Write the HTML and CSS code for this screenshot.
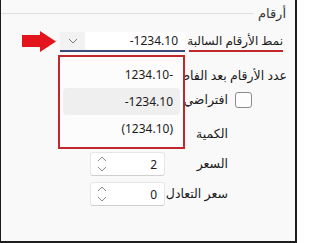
FILE: index.html
```html
<!DOCTYPE html>
<html lang="ar">
<head>
<meta charset="utf-8">
<link rel="stylesheet" href="styles.css">
</head>
<body>
<div class="window" dir="rtl">
  <div class="group">
    <div class="group-head">
      <span class="group-title">أرقام</span>
      <span class="group-line"></span>
    </div>
    <div class="form">
      <div class="row row-neg">
        <span class="lbl lbl-marked">نمط الأرقام السالبة</span>
        <div class="combo">
          <span class="combo-text num">-1234.10</span>
          <span class="combo-btn">
            <svg width="10" height="6" viewBox="0 0 10 6"><path d="M1 1 L5 5 L9 1" fill="none" stroke="#7a7a7a" stroke-width="1"/></svg>
          </span>
        </div>
      </div>
      <div class="row row-dec">
        <span class="lbl lbl-wide">عدد الأرقام بعد الفاصلة العشرية</span>
      </div>
      <div class="sub">
        <div class="check-row">
          <span class="check"></span>
          <span class="lbl">افتراضي (2)</span>
        </div>
        <div class="grid">
          <span class="lbl">الكمية</span>
          <div class="spin"><span class="spin-val num">0</span><span class="spin-btns"><svg width="10" height="18" viewBox="0 0 10 18"><path d="M1 6 L5 2 L9 6 M1 12 L5 16 L9 12" fill="none" stroke="#8a8a8a" stroke-width="1"/></svg></span></div>
          <span class="lbl">السعر</span>
          <div class="spin"><span class="spin-val num">2</span><span class="spin-btns"><svg width="10" height="18" viewBox="0 0 10 18"><path d="M1 6 L5 2 L9 6 M1 12 L5 16 L9 12" fill="none" stroke="#8a8a8a" stroke-width="1"/></svg></span></div>
          <span class="lbl">سعر التعادل</span>
          <div class="spin"><span class="spin-val num">0</span><span class="spin-btns"><svg width="10" height="18" viewBox="0 0 10 18"><path d="M1 6 L5 2 L9 6 M1 12 L5 16 L9 12" fill="none" stroke="#8a8a8a" stroke-width="1"/></svg></span></div>
        </div>
      </div>
    </div>
  </div>

  <svg class="arrow" width="35" height="21" viewBox="0 0 35 21">
    <polygon points="0,4 18,4 18,0 34,10.5 18,21 18,16 0,16" fill="#e3141b"/>
  </svg>

  <div class="popup">
    <div class="item"><span class="num">1234.10-</span></div>
    <div class="item item-hover"><span class="num">-1234.10</span></div>
    <div class="item"><span class="num">(1234.10)</span></div>
  </div>
</div>
</body>
</html>
```
FILE: styles.css
```css
html, body {
  margin: 0;
  padding: 0;
}
body {
  width: 297px;
  height: 243px;
  overflow: hidden;
  font-family: "Noto Sans", "DejaVu Sans", sans-serif;
  font-size: 12px;
  color: #1b1b1b;
}
.window {
  position: relative;
  width: 297px;
  height: 243px;
  box-sizing: border-box;
  background: #f9f9f9;
  border-left: 1px solid #1e1e1e;
  border-right: 2px solid #1e1e1e;
  border-bottom: 2px solid #1e1e1e;
  overflow: hidden;
}
.group-head {
  display: flex;
  flex-direction: row;
  padding-top: 4px;
  padding-right: 9px;
  height: 18px;
}
.group-title {
  font-size: 13px;
  line-height: 18px;
  color: #333;
}
.group-line {
  flex: 1;
  height: 1px;
  margin-top: 9px;
  margin-right: 5px;
  background: #dedede;
}
.form {
  padding-right: 12px;
  margin-top: 10px;
}
.row {
  display: flex;
  flex-direction: row;
  align-items: center;
}
.row-neg {
  height: 20px;
  gap: 4px;
}
.lbl {
  white-space: nowrap;
  line-height: 24px;
  font-size: 12.5px;
}
.lbl-marked {
  width: 94px;
  height: 20px;
  box-sizing: border-box;
  line-height: 18px;
  font-size: 12px;
  border-bottom: 2px solid #c1272d;
}
.combo {
  width: 125px;
  height: 20px;
  box-sizing: border-box;
  background: #ffffff;
  border-bottom: 2px solid #3f4a7c;
  display: flex;
  flex-direction: row;
  justify-content: space-between;
}
.combo-text {
  line-height: 18px;
  padding-right: 7px;
}
.combo-btn {
  width: 25px;
  height: 18px;
  background: #f2f2f2;
  display: flex;
  align-items: center;
  justify-content: center;
}
.num {
  direction: ltr;
  unicode-bidi: isolate;
}
.row-dec {
  margin-top: 12px;
  height: 24px;
  margin-right: -4px;
}
.sub {
  margin-right: 31px;
}
.check-row {
  display: flex;
  flex-direction: row;
  align-items: center;
  gap: 7px;
  height: 24px;
}
.check {
  width: 17px;
  height: 16px;
  box-sizing: border-box;
  border: 1px solid #8c8c8c;
  border-radius: 3px;
  background: #fdfdfd;
}
.grid {
  margin-top: 10px;
  margin-right: 24px;
  display: grid;
  grid-template-columns: 60px 75px;
  column-gap: 3px;
  row-gap: 6px;
}
.spin {
  height: 24px;
  box-sizing: border-box;
  background: #ffffff;
  border: 1px solid #e6e6e6;
  border-bottom-color: #cfcfcf;
  border-radius: 3px;
  display: flex;
  flex-direction: row;
  justify-content: space-between;
  align-items: center;
}
.spin-val {
  padding-right: 7px;
}
.spin-btns {
  display: flex;
  padding-left: 6px;
}
.arrow {
  position: absolute;
  left: 21px;
  top: 31px;
}
.popup {
  position: absolute;
  left: 57px;
  top: 55px;
  width: 127px;
  height: 94px;
  box-sizing: border-box;
  border: 2px solid #c1272d;
  background: #fcfcfc;
  padding: 4px 3px;
}
.item {
  height: 27px;
  line-height: 27px;
  padding-right: 7px;
  border-radius: 4px;
}
.item-hover {
  background: #efefef;
}
```
